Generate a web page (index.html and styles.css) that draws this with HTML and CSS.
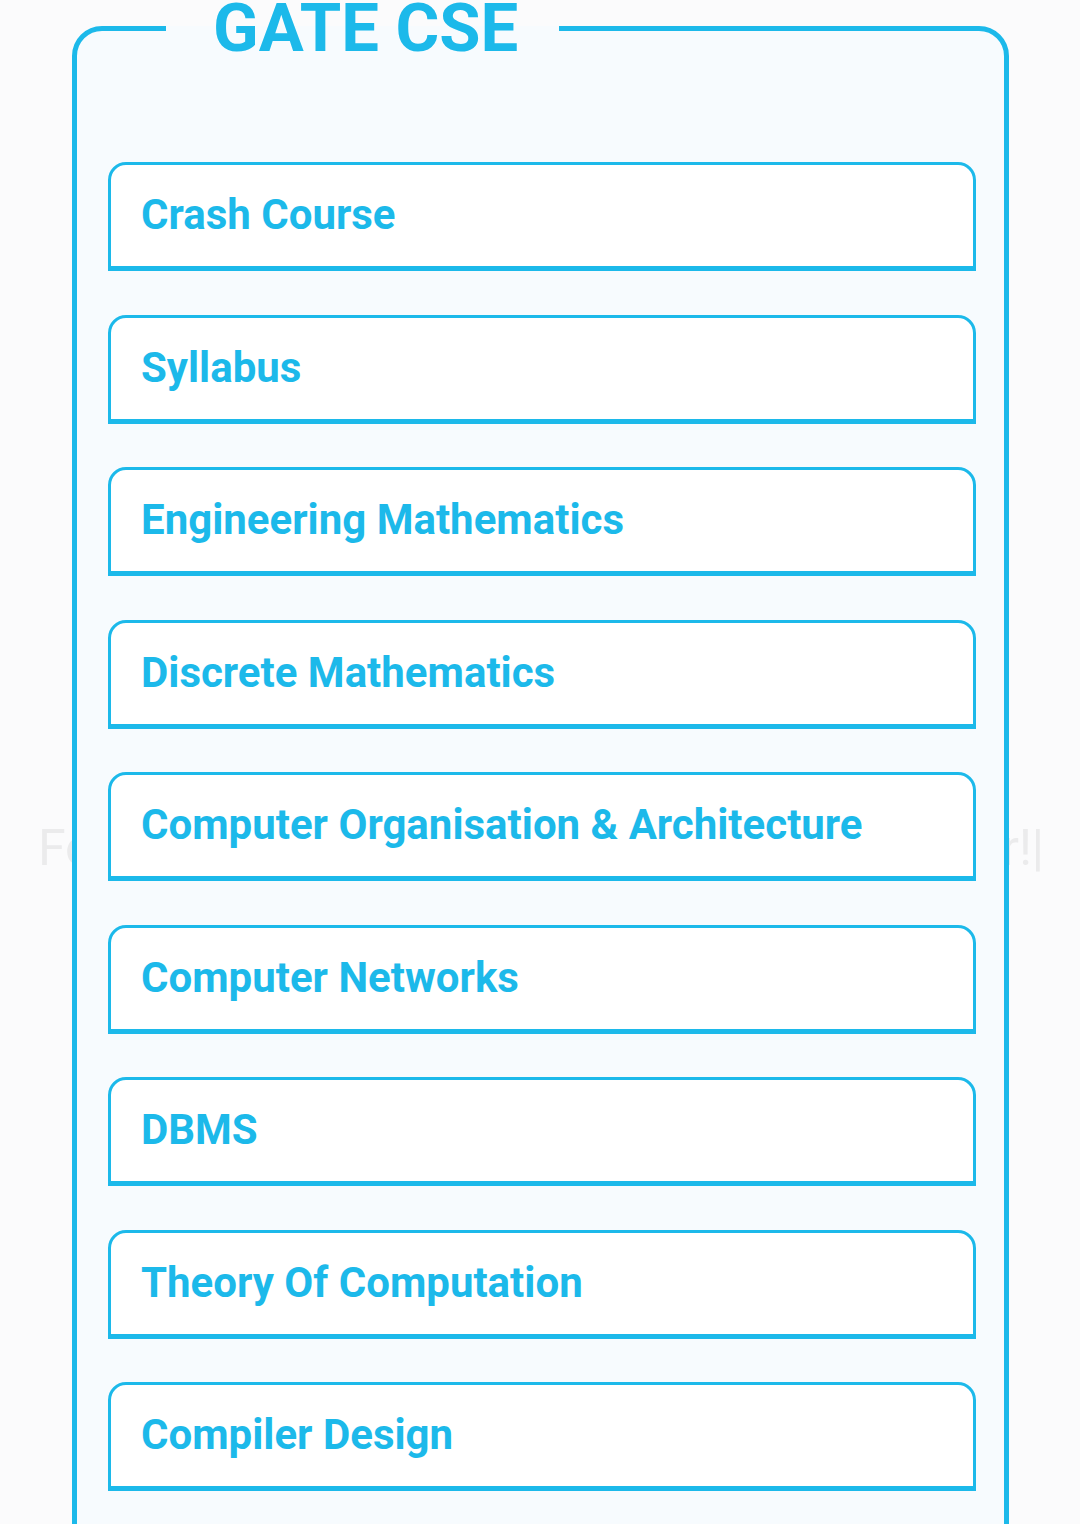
FILE: index.html
```html
<!DOCTYPE html>
<html>
<head>
<meta charset="utf-8">
<link rel="stylesheet" href="styles.css">
</head>
<body>
<div class="page">
  <div class="ghost" aria-hidden="true"><span>Fo</span><span>er!|</span></div>
  <fieldset class="panel">
    <legend class="panel-title">GATE CSE</legend>
    <div class="list">
      <div class="item">Crash Course</div>
      <div class="item">Syllabus</div>
      <div class="item">Engineering Mathematics</div>
      <div class="item">Discrete Mathematics</div>
      <div class="item">Computer Organisation &amp; Architecture</div>
      <div class="item">Computer Networks</div>
      <div class="item">DBMS</div>
      <div class="item">Theory Of Computation</div>
      <div class="item">Compiler Design</div>
    </div>
  </fieldset>
</div>
</body>
</html>
```

FILE: styles.css
```css
html, body {
  margin: 0;
  padding: 0;
}
body {
  background: #fbfbfc;
  font-family: Roboto, "Liberation Sans", Arial, sans-serif;
  height: 1524px;
  overflow: hidden;
}
.page {
  position: relative;
  padding-top: 1px;
}
.ghost {
  position: absolute;
  left: 38px;
  right: 36px;
  top: 818px;
  display: flex;
  justify-content: space-between;
  font-size: 50px;
  line-height: 60px;
  color: #ebebec;
  z-index: 0;
}
.panel {
  position: relative;
  z-index: 1;
  margin: -6px 71px 0 72px;
  border: 5px solid #1cb9ea;
  border-radius: 30px;
  background: #f7fbfe;
  padding: 100px 28px 80px 31px;
  min-width: 0;
}
.panel-title {
  margin-left: 58px;
  padding: 0 41px 0 47px;
  font-size: 67px;
  line-height: 1;
  font-weight: 700;
  color: #1cb9ea;
}
.list {
  display: flex;
  flex-direction: column;
  gap: 43.5px;
}
.item {
  background: #ffffff;
  border: 3px solid #1cb9ea;
  border-bottom-width: 5px;
  border-radius: 18px 18px 0 0;
  padding: 29px 30px 30px;
  font-size: 42px;
  line-height: 42px;
  font-weight: 700;
  color: #1cb9ea;
}
```
